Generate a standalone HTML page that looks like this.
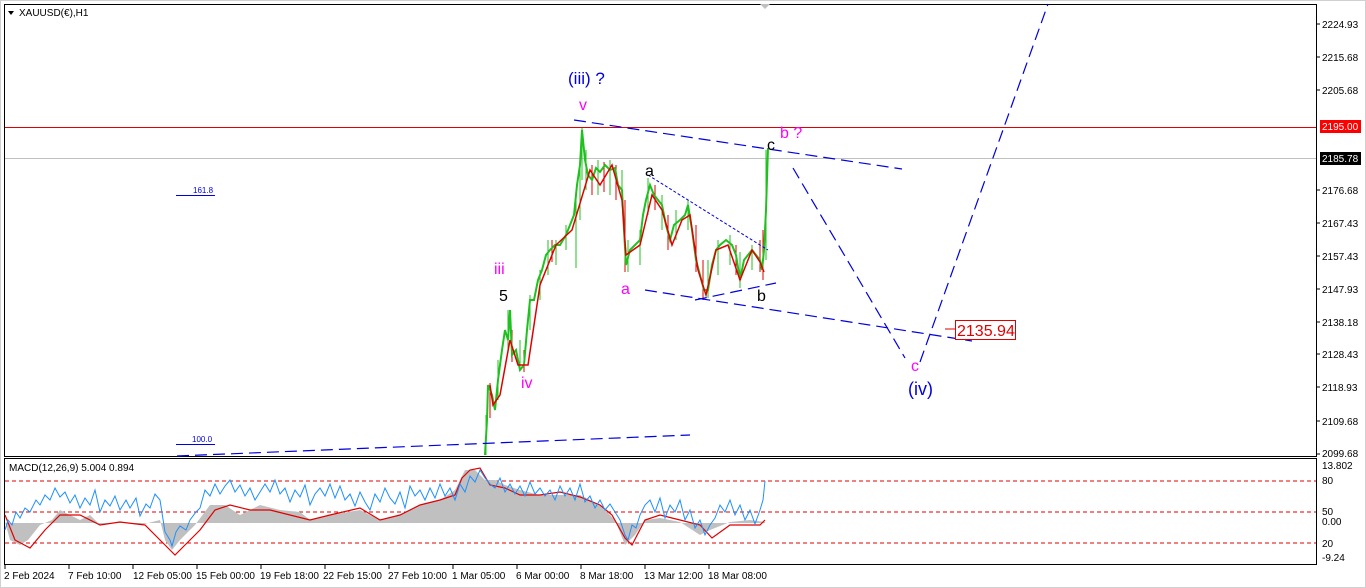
<!DOCTYPE html>
<html><head><meta charset="utf-8"><style>
body{margin:0;width:1366px;height:588px;background:#fff;overflow:hidden;font-family:"Liberation Sans",sans-serif}
svg{position:absolute;left:0;top:0}
</style></head><body>
<svg width="1366" height="588" viewBox="0 0 1366 588" xmlns="http://www.w3.org/2000/svg" font-family="Liberation Sans, sans-serif">
<rect x="0" y="0" width="1366" height="588" fill="#fff"/>
<rect x="0.5" y="0.5" width="1365" height="587" fill="none" stroke="#d0d0d0"/>
<rect x="4.5" y="4.5" width="1312" height="452" fill="none" stroke="#000"/>
<rect x="4.5" y="458.5" width="1312" height="106" fill="none" stroke="#000"/>
<polygon points="760,4 770,4 765,9" fill="#c0c0c0"/>
<polygon points="8,11 14,11 11,15" fill="#000"/>
<text x="19" y="16" font-size="10" fill="#000">XAUUSD(€),H1</text>
<line x1="5" y1="127.5" x2="1316" y2="127.5" stroke="#e00000"/>
<line x1="5" y1="158.5" x2="1316" y2="158.5" stroke="#c0c0c0"/>
<g font-size="10" fill="#000">
<text x="1322" y="28">2224.93</text><text x="1322" y="61">2215.68</text><text x="1322" y="94">2205.68</text>
<text x="1322" y="194">2176.68</text><text x="1322" y="227">2167.43</text><text x="1322" y="260">2157.43</text>
<text x="1322" y="293">2147.93</text><text x="1322" y="326">2138.18</text><text x="1322" y="358">2128.43</text>
<text x="1322" y="391">2118.93</text><text x="1322" y="425">2109.68</text><text x="1322" y="457">2099.68</text>
<text x="1322" y="469">13.802</text><text x="1322" y="484">80</text><text x="1322" y="515">50</text>
<text x="1322" y="525">0.00</text><text x="1322" y="547">20</text><text x="1322" y="561">-9.24</text>
</g>
<g stroke="#000"><line x1="1317" y1="24" x2="1320" y2="24"/><line x1="1317" y1="57" x2="1320" y2="57"/><line x1="1317" y1="90" x2="1320" y2="90"/><line x1="1317" y1="190" x2="1320" y2="190"/><line x1="1317" y1="223" x2="1320" y2="223"/><line x1="1317" y1="256" x2="1320" y2="256"/><line x1="1317" y1="289" x2="1320" y2="289"/><line x1="1317" y1="322" x2="1320" y2="322"/><line x1="1317" y1="354" x2="1320" y2="354"/><line x1="1317" y1="387" x2="1320" y2="387"/><line x1="1317" y1="421" x2="1320" y2="421"/><line x1="1317" y1="454" x2="1320" y2="454"/></g>
<rect x="1320" y="120" width="41" height="13" fill="#ff0000"/><text x="1322" y="130" font-size="10" fill="#fff">2195.00</text>
<rect x="1320" y="152" width="41" height="13" fill="#000"/><text x="1322" y="162" font-size="10" fill="#fff">2185.78</text>
<!-- candle wicks -->
<g stroke="#20c020" stroke-width="1">
<line x1="486" y1="455" x2="486" y2="415"/><line x1="498" y1="400" x2="498" y2="360"/><line x1="508" y1="350" x2="508" y2="310"/><line x1="520" y1="370" x2="520" y2="340"/><line x1="530" y1="330" x2="530" y2="295"/><line x1="540" y1="300" x2="540" y2="270"/><line x1="548" y1="275" x2="548" y2="240"/><line x1="556" y1="265" x2="556" y2="240"/><line x1="566" y1="250" x2="566" y2="225"/><line x1="576" y1="268" x2="576" y2="190"/><line x1="580" y1="220" x2="580" y2="160"/><line x1="582" y1="180" x2="582" y2="128"/><line x1="586" y1="190" x2="586" y2="150"/><line x1="598" y1="195" x2="598" y2="160"/><line x1="610" y1="195" x2="610" y2="160"/><line x1="622" y1="205" x2="622" y2="170"/><line x1="628" y1="272" x2="628" y2="240"/><line x1="640" y1="265" x2="640" y2="230"/><line x1="648" y1="215" x2="648" y2="178"/><line x1="662" y1="230" x2="662" y2="195"/><line x1="676" y1="240" x2="676" y2="210"/><line x1="688" y1="230" x2="688" y2="200"/><line x1="708" y1="298" x2="708" y2="260"/><line x1="718" y1="275" x2="718" y2="240"/><line x1="730" y1="265" x2="730" y2="235"/><line x1="740" y1="288" x2="740" y2="252"/><line x1="752" y1="270" x2="752" y2="245"/><line x1="766" y1="260" x2="766" y2="150"/>
</g>
<g stroke="#e00000" stroke-width="1">
<line x1="490" y1="418" x2="490" y2="383"/><line x1="512" y1="362" x2="512" y2="330"/><line x1="524" y1="372" x2="524" y2="350"/><line x1="552" y1="262" x2="552" y2="240"/><line x1="592" y1="195" x2="592" y2="165"/><line x1="604" y1="192" x2="604" y2="162"/><line x1="616" y1="200" x2="616" y2="165"/><line x1="625" y1="272" x2="625" y2="200"/><line x1="655" y1="210" x2="655" y2="185"/><line x1="668" y1="250" x2="668" y2="215"/><line x1="696" y1="272" x2="696" y2="225"/><line x1="703" y1="300" x2="703" y2="260"/><line x1="736" y1="275" x2="736" y2="245"/><line x1="760" y1="272" x2="760" y2="240"/><line x1="763" y1="280" x2="763" y2="230"/>
</g>
<polyline fill="none" stroke="#20c020" stroke-width="2" points="485,455 487,420 488,385 492,395 495,410 498,380 502,350 505,330 508,340 510,310 512,355 516,350 520,370 524,365 527,330 530,300 534,300 538,280 542,270 546,255 550,250 555,245 560,245 566,235 570,225 574,215 577,185 580,165 582,130 585,160 588,175 592,180 596,168 600,172 605,165 610,170 615,168 618,185 622,190 624,230 626,265 630,250 635,245 640,240 643,215 646,200 650,185 654,195 658,200 662,205 666,225 670,240 674,225 680,220 685,215 688,205 692,230 696,260 700,275 704,290 708,290 712,265 716,250 720,245 726,240 732,245 736,255 740,280 744,260 748,255 752,250 756,255 760,260 762,270 764,250 766,210 768,148"/>
<polyline fill="none" stroke="#e00000" stroke-width="1.5" points="490,385 493,405 500,395 510,340 518,365 528,365 540,285 556,245 572,230 590,170 600,185 612,165 622,200 626,255 640,245 652,195 662,210 672,245 682,220 690,215 698,270 706,295 716,250 728,245 740,280 752,250 760,262 764,272"/>
<g stroke="#0000e0" stroke-width="1.2" fill="none" stroke-dasharray="12,6">
<line x1="574" y1="120" x2="902" y2="169"/>
<line x1="793" y1="168" x2="905" y2="358"/>
<line x1="920" y1="362" x2="1048" y2="4"/>
<line x1="645" y1="290" x2="972" y2="341"/>
<line x1="177" y1="456" x2="690" y2="435"/>
<line x1="695" y1="300" x2="776" y2="283"/>
</g>
<line x1="648" y1="175" x2="768" y2="250" stroke="#0000e0" stroke-dasharray="3,2"/>
<line x1="176" y1="195.5" x2="215" y2="195.5" stroke="#0000e0"/>
<text x="193" y="193" font-size="8" fill="#0000e0">161.8</text>
<line x1="176" y1="444.5" x2="215" y2="444.5" stroke="#0000e0"/>
<text x="192" y="442" font-size="8" fill="#0000e0">100.0</text>
<text x="568" y="84" font-size="17" fill="#0000e0">(iii) ?</text>
<text x="579" y="110" font-size="16" fill="#ff00ff">v</text>
<text x="780" y="138" font-size="16" fill="#ff00ff">b ?</text>
<text x="767" y="150" font-size="16" fill="#000">c</text>
<text x="645" y="176" font-size="16" fill="#000">a</text>
<text x="494" y="274" font-size="16" fill="#ff00ff">iii</text>
<text x="499" y="301" font-size="16" fill="#000">5</text>
<text x="621" y="294" font-size="16" fill="#ff00ff">a</text>
<text x="757" y="301" font-size="16" fill="#000">b</text>
<text x="521" y="388" font-size="16" fill="#ff00ff">iv</text>
<text x="911" y="371" font-size="16" fill="#ff00ff">c</text>
<text x="908" y="395" font-size="18" fill="#0000e0">(iv)</text>
<line x1="945" y1="329" x2="955" y2="329" stroke="#e00000"/>
<rect x="955.5" y="320.5" width="60" height="19" fill="#fff" stroke="#e00000"/>
<text x="957" y="336" font-size="16" fill="#e00000">2135.94</text>
<text x="9" y="471" font-size="10" fill="#000">MACD(12,26,9) 5.004 0.894</text>
<g stroke="#e00000" stroke-dasharray="4,3"><line x1="5" y1="481" x2="1316" y2="481"/><line x1="5" y1="512" x2="1316" y2="512"/><line x1="5" y1="543" x2="1316" y2="543"/></g>
<polygon fill="#c0c0c0" points="5,522 10,540 20,545 28,540 40,525 52,520 60,510 70,515 80,520 90,515 100,525 120,522 140,525 160,520 165,540 172,550 180,540 195,525 210,505 225,505 240,515 260,505 280,510 300,512 310,520 330,515 360,510 380,520 400,515 420,505 440,500 455,490 465,470 475,470 485,480 495,480 505,485 520,490 540,495 560,495 580,495 600,505 615,520 625,545 635,535 645,520 660,518 680,522 700,535 710,530 730,522 750,520 765,522 765,523 5,523"/>
<polyline fill="none" stroke="#e00000" stroke-width="1.2" points="5,515 15,540 30,548 45,530 60,515 80,515 100,525 120,522 145,525 165,545 175,555 185,545 200,530 215,510 230,505 250,510 270,510 290,515 310,520 330,515 360,508 380,520 400,515 420,505 440,500 455,495 462,478 470,470 480,468 490,485 505,488 520,495 540,495 560,492 580,497 600,505 612,515 625,538 632,545 645,520 660,515 680,520 700,525 712,538 730,525 745,525 760,525 765,520"/>
<polyline fill="none" stroke="#1e90ff" stroke-width="1" points="5,530 8,520 12,525 16,512 20,518 25,508 30,512 36,500 40,505 45,495 50,500 55,488 60,497 65,492 70,503 75,495 80,508 85,498 90,505 95,490 100,512 105,500 110,506 115,496 120,510 126,500 130,508 136,498 140,516 146,504 150,508 155,494 160,500 165,532 170,540 172,546 176,532 180,526 186,530 190,520 196,512 200,508 205,490 210,496 215,484 220,494 225,486 230,480 235,492 240,485 245,496 250,488 255,500 260,492 265,484 270,492 275,480 280,494 285,488 290,502 295,490 300,497 305,485 310,505 315,494 320,488 325,496 330,484 335,498 340,486 345,500 350,494 355,506 360,492 365,502 370,510 375,494 380,502 385,488 390,498 395,504 400,492 405,508 410,486 415,496 420,490 425,500 430,488 435,498 440,484 445,496 450,488 455,500 460,484 465,492 470,476 475,482 480,470 485,478 490,484 495,488 500,478 505,492 510,484 515,494 520,486 525,496 530,482 535,494 540,488 545,496 550,490 555,500 560,486 565,496 570,488 575,500 580,484 585,502 590,496 595,508 600,500 605,510 610,504 615,512 620,520 625,535 628,540 632,525 636,528 640,515 645,505 650,500 655,512 660,498 665,518 670,505 675,512 680,500 685,520 690,510 695,528 700,520 705,535 710,525 715,518 720,505 725,512 730,500 735,515 740,505 745,520 750,510 755,524 760,510 763,500 765,481"/>
<g font-size="10" fill="#000">
<text x="4" y="579">2 Feb 2024</text><text x="68" y="579">7 Feb 10:00</text><text x="133" y="579">12 Feb 05:00</text>
<text x="196" y="579">15 Feb 00:00</text><text x="260" y="579">19 Feb 18:00</text><text x="323" y="579">22 Feb 15:00</text>
<text x="388" y="579">27 Feb 10:00</text><text x="452" y="579">1 Mar 05:00</text><text x="516" y="579">6 Mar 00:00</text>
<text x="580" y="579">8 Mar 18:00</text><text x="644" y="579">13 Mar 12:00</text><text x="708" y="579">18 Mar 08:00</text>
</g>
<g stroke="#000"><line x1="5" y1="565" x2="5" y2="569"/><line x1="69" y1="565" x2="69" y2="569"/><line x1="133" y1="565" x2="133" y2="569"/><line x1="197" y1="565" x2="197" y2="569"/><line x1="261" y1="565" x2="261" y2="569"/><line x1="325" y1="565" x2="325" y2="569"/><line x1="389" y1="565" x2="389" y2="569"/><line x1="453" y1="565" x2="453" y2="569"/><line x1="517" y1="565" x2="517" y2="569"/><line x1="581" y1="565" x2="581" y2="569"/><line x1="645" y1="565" x2="645" y2="569"/><line x1="709" y1="565" x2="709" y2="569"/></g>
</svg>
</body></html>
